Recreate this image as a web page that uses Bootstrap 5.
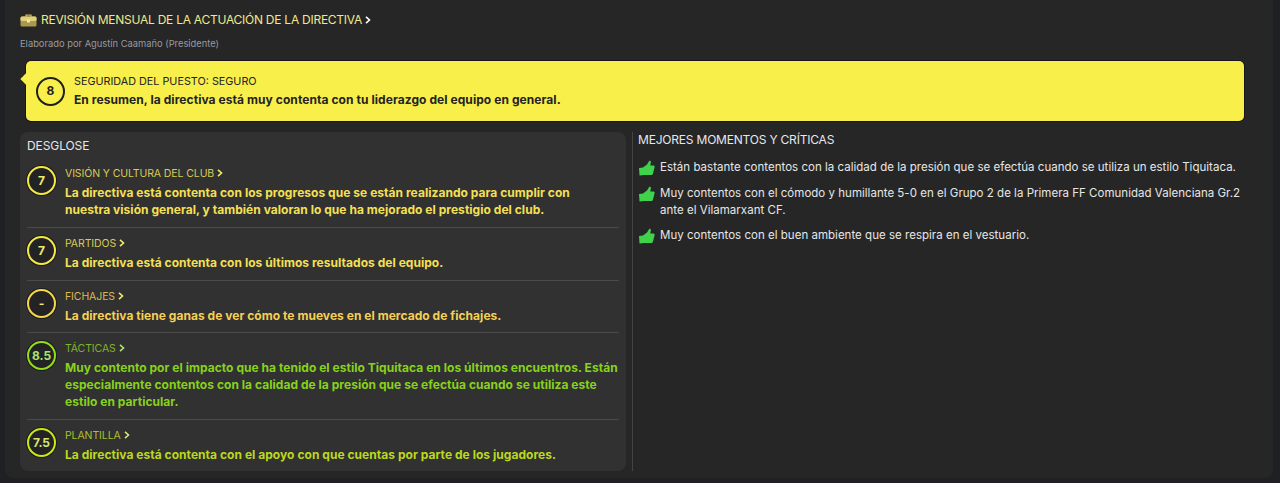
<!DOCTYPE html>
<html lang="es"><head><meta charset="utf-8"><title>Revisión</title>
<link href="https://cdn.jsdelivr.net/npm/bootstrap@5.3.0/dist/css/bootstrap.min.css" rel="stylesheet">
<style>
html,body{height:483px;overflow:hidden}
body{background:#1f2023;font-family:Inter,"Noto Sans",sans-serif;color:#eee;font-size:12px}
.shell{margin-left:5px;width:1268px;height:478px;background:#262627;border-radius:0 0 8px 8px;padding:10px 0 0 15px}
.head-title{font-size:12px;line-height:20px;color:#efe98a;letter-spacing:-.25px}
.sub-title{font-size:9.35px;line-height:14px;color:#9a9a9f;margin-top:7px}
.job{position:relative;margin:10px 0 0 6px;width:1218px;height:60px;background:#f8ef4b;border-radius:5px;color:#232323;padding:0 10px;box-shadow:0 0 0 1px #17171a}
.job::before{content:"";position:absolute;left:-4px;top:14px;width:8px;height:8px;background:#f8ef4b;transform:rotate(45deg)}
.job-label{font-size:10.8px;line-height:18px}
.job-text{font-size:12px;line-height:20px;font-weight:700;letter-spacing:.07px;margin-top:-1px}
.score{flex:0 0 29px;width:29px;height:29px;border:2.5px solid currentColor;border-radius:50%;background:#232326;display:flex;align-items:center;justify-content:center;font-weight:700;font-size:12px;color:#f5e93f;box-shadow:0 0 0 1px #1b1b1e}
.score span{color:#f1ec6b}
.job .score{background:transparent;color:#1f1f1f;box-shadow:none;margin-right:9px}
.job .score span{color:#1f1f1f}
.cols{margin-top:11px;height:339px}
.panel{width:606px;height:339px;background:#313132;border-radius:8px;padding:6px 7px 0 7px}
.side{margin-left:6px;padding-left:5px;border-left:1px solid #444;flex:1;height:339px}
.cap{font-size:12px;line-height:16px;color:#e5e8ee;letter-spacing:-.1px}
.side .cap{letter-spacing:-.2px}
.item{display:flex;gap:9px;border-bottom:1px solid #4a4a4b}
.item:last-child{border-bottom:0}
.item-name{font-size:10.5px;line-height:14px;letter-spacing:-.1px;margin-top:1px}
.item-text{font-size:12px;line-height:17px;font-weight:700;margin-top:2.5px;letter-spacing:.04px}
.c-y{color:#f5e052}
.c-y .item-name{color:#d9c955}
.c-a{color:#f5d052}
.c-a .item-name{color:#dcb94e}
.c-a .score{color:#f5d74a}
.c-g{color:#88d21c}
.c-g .item-name{color:#7fb52a}
.c-g .score{color:#93dd1a}.c-g .score span{color:#b0e070}
.c-l{color:#bcd91c}
.c-l .item-name{color:#adc02a}
.c-l .score{color:#cbe80f}.c-l .score span{color:#d6e570}
.i1{height:62px;margin-top:12px}
.i2{height:53px;padding-top:8px}
.i3{height:52px;padding-top:8px}
.i4{height:87px;padding-top:8px}
.i5{height:50px;padding-top:8px}
.moment{display:flex;gap:5px;font-size:11.5px;line-height:17px;color:#e6e6e6;margin-bottom:8.5px;letter-spacing:.02px}
.moment svg{flex:0 0 17px;margin-top:1px}
.moments{margin-top:11px}
.chev{width:6px;height:8px;margin-left:3px;vertical-align:0}
</style></head><body>
<div class="shell">
 <div class="head-title d-flex align-items-center">
  <svg width="17" height="13" viewBox="0 0 17 13" class="me-1"><path d="M6 3V1.2h5V3" fill="none" stroke="#c9b65c" stroke-width="1.3"/><rect x=".5" y="2.5" width="16" height="10" rx="1.5" fill="#a8994e"/><rect x=".5" y="2.5" width="16" height="4.5" rx="1.5" fill="#e0d07a"/><rect x="7" y="5.5" width="3" height="3" fill="#f3e9a0"/></svg>
  <span>REVISIÓN MENSUAL DE LA ACTUACIÓN DE LA DIRECTIVA</span><svg class="chev" viewBox="0 0 6 8"><path d="M1 .8 4.500 4 1 7.200" fill="none" stroke="#fff" stroke-width="1.6"/></svg>
 </div>
 <div class="sub-title">Elaborado por Agustín Caamaño (Presidente)</div>
 <div class="job d-flex align-items-center">
  <div class="score"><span>8</span></div>
  <div><div class="job-label">SEGURIDAD DEL PUESTO: SEGURO</div><div class="job-text">En resumen, la directiva está muy contenta con tu liderazgo del equipo en general.</div></div>
 </div>
 <div class="cols d-flex">
  <div class="panel">
   <div class="cap">DESGLOSE</div>
   <div class="item i1 c-y"><div class="score"><span>7</span></div><div><div class="item-name">VISIÓN Y CULTURA DEL CLUB<svg class="chev" viewBox="0 0 6 8"><path d="M1 .8 4.500 4 1 7.200" fill="none" stroke="#f1ec6b" stroke-width="1.6"/></svg></div><div class="item-text">La directiva está contenta con los progresos que se están realizando para cumplir con<br>nuestra visión general, y también valoran lo que ha mejorado el prestigio del club.</div></div></div>
   <div class="item i2 c-y"><div class="score"><span>7</span></div><div><div class="item-name">PARTIDOS<svg class="chev" viewBox="0 0 6 8"><path d="M1 .8 4.500 4 1 7.200" fill="none" stroke="#f1ec6b" stroke-width="1.6"/></svg></div><div class="item-text">La directiva está contenta con los últimos resultados del equipo.</div></div></div>
   <div class="item i3 c-a"><div class="score"><span>-</span></div><div><div class="item-name">FICHAJES<svg class="chev" viewBox="0 0 6 8"><path d="M1 .8 4.500 4 1 7.200" fill="none" stroke="#f1ec6b" stroke-width="1.6"/></svg></div><div class="item-text">La directiva tiene ganas de ver cómo te mueves en el mercado de fichajes.</div></div></div>
   <div class="item i4 c-g"><div class="score"><span>8.5</span></div><div><div class="item-name">TÁCTICAS<svg class="chev" viewBox="0 0 6 8"><path d="M1 .8 4.500 4 1 7.200" fill="none" stroke="#b0e070" stroke-width="1.6"/></svg></div><div class="item-text">Muy contento por el impacto que ha tenido el estilo Tiquitaca en los últimos encuentros. Están<br>especialmente contentos con la calidad de la presión que se efectúa cuando se utiliza este<br>estilo en particular.</div></div></div>
   <div class="item i5 c-l"><div class="score"><span>7.5</span></div><div><div class="item-name">PLANTILLA<svg class="chev" viewBox="0 0 6 8"><path d="M1 .8 4.500 4 1 7.200" fill="none" stroke="#d6e570" stroke-width="1.6"/></svg></div><div class="item-text">La directiva está contenta con el apoyo con que cuentas por parte de los jugadores.</div></div></div>
  </div>
  <div class="side">
   <div class="cap">MEJORES MOMENTOS Y CRÍTICAS</div>
   <div class="moments">
    <div class="moment"><svg width="17" height="16" viewBox="0 0 17 16"><path d="M1 8 5 7.500 9 4.500 11.500.5 13 1.500 12.300 5.500H15.500C16.500 5.500 17 6.500 16.500 7.500L15 13.500C14.700 14.500 14 15 13 15H6L1.500 15.500z" fill="#3fd24a"/></svg><div>Están bastante contentos con la calidad de la presión que se efectúa cuando se utiliza un estilo Tiquitaca.</div></div>
    <div class="moment"><svg width="17" height="16" viewBox="0 0 17 16"><path d="M1 8 5 7.500 9 4.500 11.500.5 13 1.500 12.300 5.500H15.500C16.500 5.500 17 6.500 16.500 7.500L15 13.500C14.700 14.500 14 15 13 15H6L1.500 15.500z" fill="#3fd24a"/></svg><div>Muy contentos con el cómodo y humillante 5-0 en el Grupo 2 de la Primera FF Comunidad Valenciana Gr.2<br>ante el Vilamarxant CF.</div></div>
    <div class="moment"><svg width="17" height="16" viewBox="0 0 17 16"><path d="M1 8 5 7.500 9 4.500 11.500.5 13 1.500 12.300 5.500H15.500C16.500 5.500 17 6.500 16.500 7.500L15 13.500C14.700 14.500 14 15 13 15H6L1.500 15.500z" fill="#3fd24a"/></svg><div>Muy contentos con el buen ambiente que se respira en el vestuario.</div></div>
   </div>
  </div>
 </div>
</div>
<script src="https://cdn.jsdelivr.net/npm/bootstrap@5.3.0/dist/js/bootstrap.bundle.min.js"></script>
</body></html>
